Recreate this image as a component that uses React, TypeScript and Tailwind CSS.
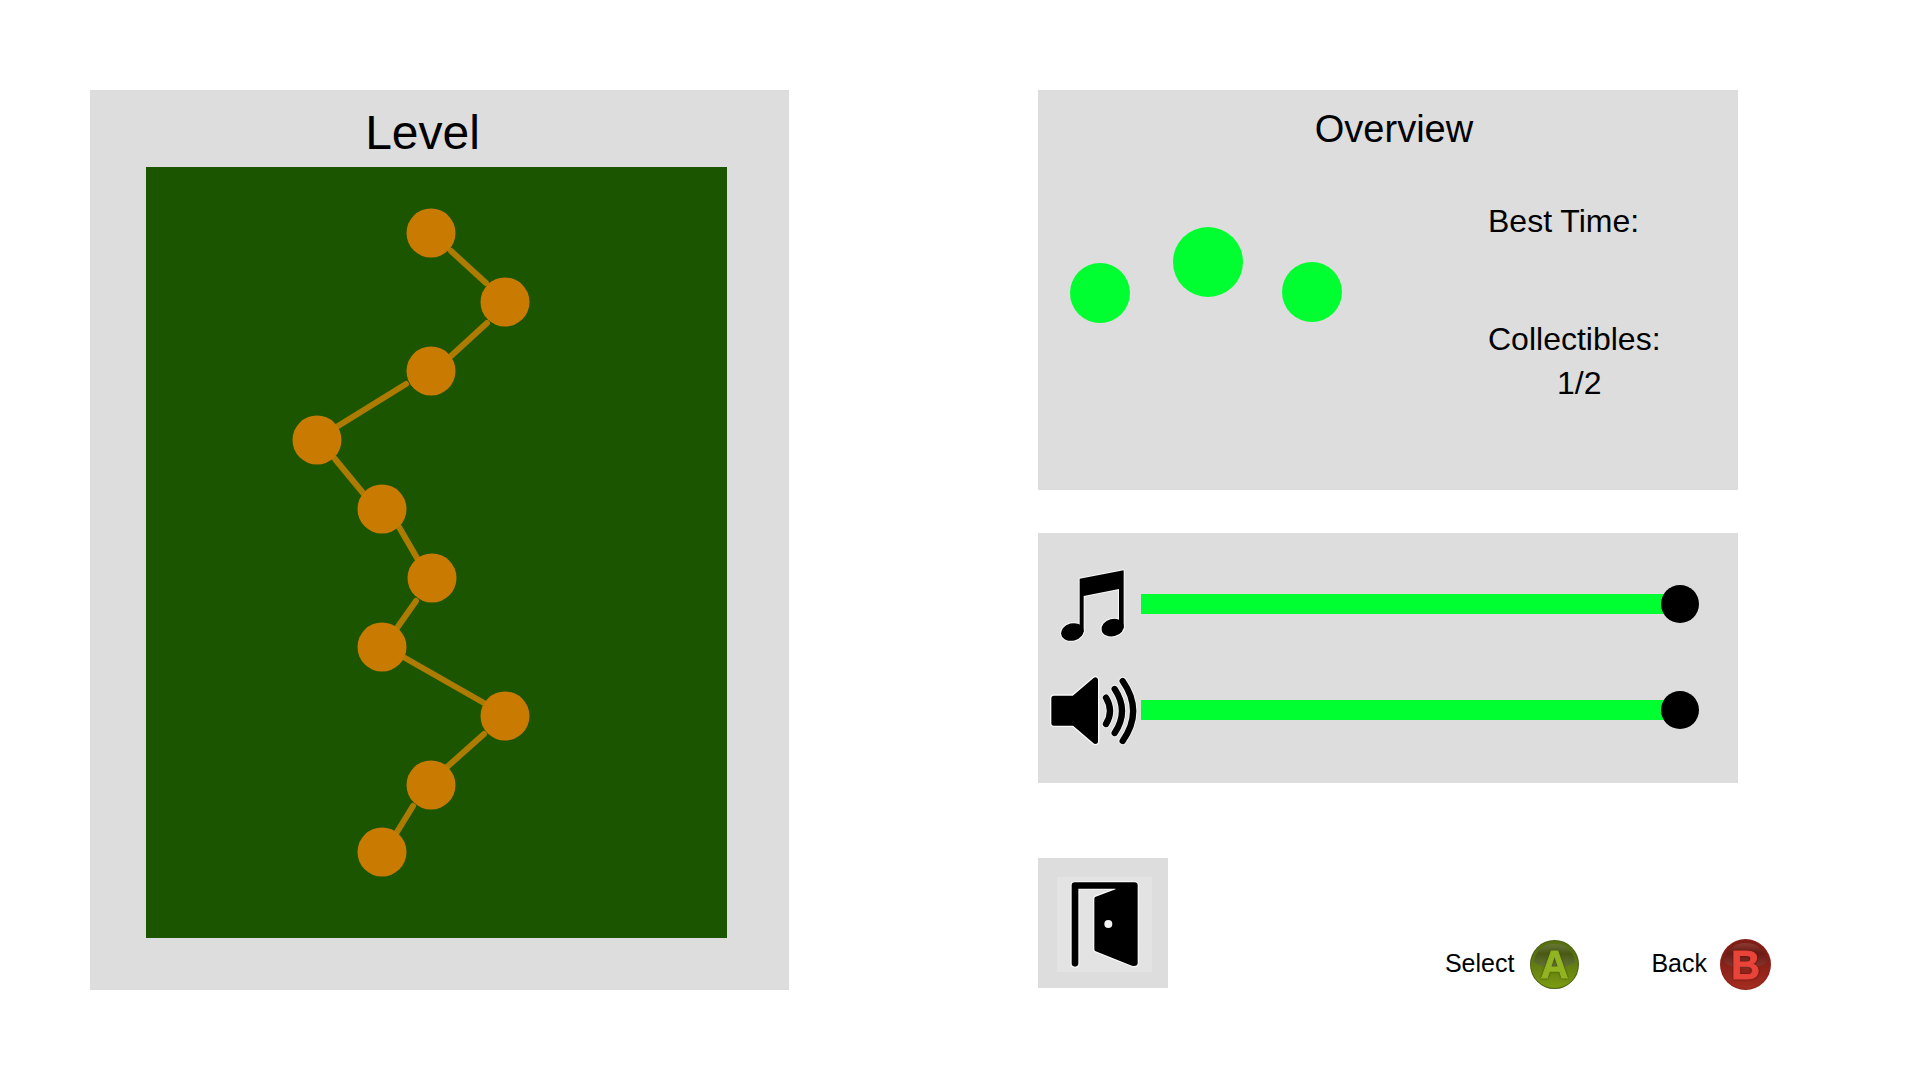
import React from "react";

const MAP_W = 581;
const MAP_H = 771;

const nodes = [
  [285, 66],
  [359, 135],
  [285, 204],
  [171, 273],
  [236, 342],
  [286, 411],
  [236, 480],
  [359, 549],
  [285, 618],
  [236, 685],
];

const paths = [
  [305, 84, 340, 116],
  [341, 156, 305, 189],
  [260, 217, 192, 259],
  [189, 292, 217, 326],
  [253, 360, 271, 391],
  [270, 434, 251, 461],
  [259, 491, 338, 536],
  [338, 567, 301, 600],
  [267, 639, 251, 665],
];

function LevelMap() {
  return (
    <div className="relative aspect-[581/771] w-full bg-[#1b5500]">
      <svg
        className="absolute inset-0 h-full w-full"
        viewBox={`0 0 ${MAP_W} ${MAP_H}`}
        aria-hidden="true"
      >
        {paths.map(([x1, y1, x2, y2], i) => (
          <line key={i} x1={x1} y1={y1} x2={x2} y2={y2} stroke="#ad7b00" strokeWidth="6" strokeLinecap="round" />
        ))}
      </svg>
      {nodes.map(([x, y], i) => (
        <button
          key={i}
          type="button"
          aria-label={`Level ${nodes.length - i}`}
          className="absolute aspect-square w-[49px] -translate-x-1/2 -translate-y-1/2 rounded-full bg-[#c87b00]"
          style={{ left: `${(x / MAP_W) * 100}%`, top: `${(y / MAP_H) * 100}%` }}
        />
      ))}
    </div>
  );
}

function MusicIcon() {
  const note = (
    <>
      <path d="M149 176L281 151V324H267V207L161 228V337H149Z" />
      <ellipse cx="127" cy="336" rx="34" ry="26" transform="rotate(-14 127 336)" />
      <ellipse cx="248" cy="323" rx="34" ry="26" transform="rotate(-14 248 323)" />
    </>
  );
  return (
    <svg className="w-[91px] shrink-0" viewBox="60 138 273 228" aria-hidden="true">
      <g fill="#f8f8f8" stroke="#f8f8f8" strokeWidth="6" strokeLinejoin="round">{note}</g>
      <g>{note}</g>
    </svg>
  );
}

function SpeakerIcon() {
  const cone = "M72 535H132L196 480V664L132 609H72Z";
  const waves = "M228 533Q252 573 228 612M254 507Q298 573 254 639M278 483Q341 573 278 663";
  return (
    <svg className="w-[91px] shrink-0" viewBox="60 456 273 228" aria-hidden="true" strokeLinecap="round" strokeLinejoin="round">
      <g fill="none" stroke="#f8f8f8" strokeWidth="24">
        <path d={cone} />
        <path d={waves} />
      </g>
      <path d={cone} stroke="#000" strokeWidth="16" />
      <path d={waves} fill="none" stroke="#000" strokeWidth="19" />
    </svg>
  );
}

function DoorIcon() {
  const frame =
    "M134 97H314Q323 97 323 106V339Q323 348 312 348Q306 348 300 345L197 304Q193 302 193 298V146Q193 142 197 140L257 118V116H145V340Q145 350 135 350Q125 350 125 340V106Q125 97 134 97Z";
  return (
    <svg className="size-full" viewBox="24 24 390 390" aria-hidden="true">
      <rect x="81" y="81" width="285" height="285" fill="#e3e3e3" />
      <path d={frame} fill="none" stroke="#fafafa" strokeWidth="7" strokeLinejoin="round" />
      <path d={frame} />
      <circle cx="235" cy="222" r="12" fill="#f2f2f2" />
    </svg>
  );
}

type BadgeColors = { base: string; low: string; rim: string; glossTop: string; gloss: string; letter: string; shade: string };

const green: BadgeColors = {
  base: "#587010",
  low: "#7c9c12",
  rim: "#48600f",
  glossTop: "#4a5a14",
  gloss: "#66763a",
  letter: "#92b422",
  shade: "#3a4a06",
};

const red: BadgeColors = {
  base: "#7d1d15",
  low: "#a52c20",
  rim: "#8c2218",
  glossTop: "#6b1a14",
  gloss: "#8a3a31",
  letter: "#e8443a",
  shade: "#520d08",
};

function PadBadge({ letter, colors, className }: { letter: string; colors: BadgeColors; className: string }) {
  return (
    <svg className={className} viewBox="0 0 50 50" aria-hidden="true">
      <defs>
        <linearGradient id={`base-${letter}`} x1="0" y1="0" x2="0" y2="1">
          <stop offset="0.3" stopColor={colors.base} />
          <stop offset="1" stopColor={colors.low} />
        </linearGradient>
        <linearGradient id={`gloss-${letter}`} x1="0" y1="0" x2="0" y2="1">
          <stop offset="0" stopColor={colors.gloss} />
          <stop offset="0.4" stopColor={colors.glossTop} />
          <stop offset="1" stopColor={colors.gloss} />
        </linearGradient>
      </defs>
      <circle cx="25" cy="25" r="25" fill={colors.rim} />
      <circle cx="25" cy="25" r="24" fill={`url(#base-${letter})`} />
      <path d="M4 23C5 11 14 4 25 4S45 11 46 23Q36 29 25 29T4 23Z" fill={`url(#gloss-${letter})`} />
      <text
        x="25"
        y="39"
        textAnchor="middle"
        fill={colors.letter}
        stroke={colors.letter}
        className="text-[39px] font-bold"
        style={{ filter: `drop-shadow(0 0 1px ${colors.shade})` }}
      >
        {letter}
      </text>
    </svg>
  );
}

function VolumeRow({ label, icon }: { label: string; icon: React.ReactNode }) {
  return (
    <label className="flex items-center">
      {icon}
      <input
        type="range"
        aria-label={label}
        min={0}
        max={100}
        defaultValue={100}
        className="h-[38px] min-w-0 flex-1 appearance-none bg-[linear-gradient(#00ff30,#00ff30)] bg-[length:calc(100%-12px)_20px] bg-left bg-no-repeat [&::-webkit-slider-thumb]:size-[38px] [&::-webkit-slider-thumb]:appearance-none [&::-webkit-slider-thumb]:rounded-full [&::-webkit-slider-thumb]:bg-black"
      />
    </label>
  );
}

export default function App() {
  return (
    <main className="min-h-screen bg-white pt-[90px] pr-[182px] pb-[90px] pl-[90px] font-['Liberation_Sans',Arial,sans-serif] text-black">
      <div className="grid grid-cols-[699fr_700fr] items-start gap-[249px]">
        <section className="bg-[#dddddd] pr-[62px] pb-[52px] pl-[56px]">
          <h1 className="pt-[19px] pr-[28px] pb-[10px] text-center text-[48px] leading-none">Level</h1>
          <LevelMap />
        </section>

        <div className="flex flex-col">
          <section className="bg-[#dddddd] pt-5 pb-[85px]">
            <h2 className="pl-3 text-center text-[38px] leading-none">Overview</h2>
            <div className="mt-[51px] flex justify-between">
              <div className="flex items-start pt-7 pl-8">
                <span className="mt-9 size-[60px] rounded-full bg-[#00ff30]" />
                <span className="mr-[39px] ml-[43px] size-[70px] rounded-full bg-[#00ff30]" />
                <span className="mt-[35px] size-[60px] rounded-full bg-[#00ff30]" />
              </div>
              <div className="w-[250px] text-[32px] leading-[44px]">
                <p>Best Time:</p>
                <div className="mt-[74px] w-fit">
                  <p>Collectibles:</p>
                  <p className="pl-2.5 text-center">1/2</p>
                </div>
              </div>
            </div>
          </section>

          <section className="mt-[43px] flex flex-col gap-[30px] bg-[#dddddd] pt-[33px] pr-[39px] pb-[35px] pl-3">
            <VolumeRow label="Music volume" icon={<MusicIcon />} />
            <VolumeRow label="Sound volume" icon={<SpeakerIcon />} />
          </section>

          <footer className="mt-[75px] -mr-[33px] flex h-[132px] items-start justify-between">
            <button type="button" aria-label="Exit" className="size-[130px] bg-[#dddddd]">
              <DoorIcon />
            </button>
            <div className="flex gap-[72px] self-end text-[25px] leading-[28px]">
              <button type="button" className="flex items-center gap-4">
                <span className="pb-[3px]">Select</span>
                <PadBadge letter="A" colors={green} className="size-[49px]" />
              </button>
              <button type="button" className="flex items-center gap-[13px]">
                <span className="pb-[3px]">Back</span>
                <PadBadge letter="B" colors={red} className="size-[51px]" />
              </button>
            </div>
          </footer>
        </div>
      </div>
    </main>
  );
}
